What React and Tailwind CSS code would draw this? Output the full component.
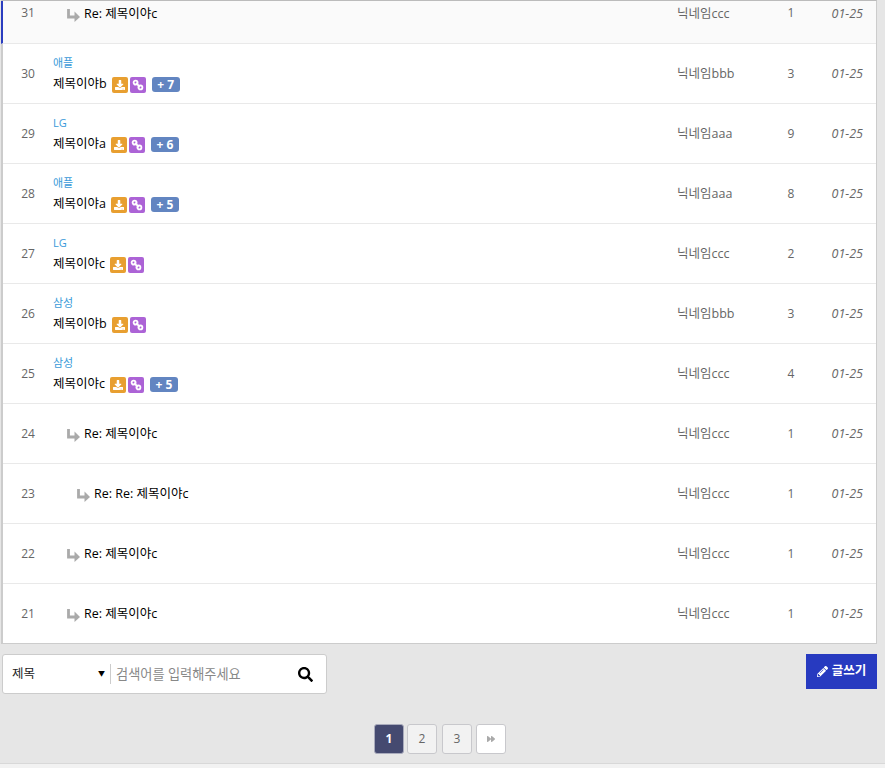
import { FaDownload, FaSearch, FaPencilAlt, FaForward } from 'react-icons/fa'

const ROWS = [
  { no: 30, cat: '애플', title: '제목이야b', name: '닉네임bbb', hit: 3, files: true, more: 7 },
  { no: 29, cat: 'LG', title: '제목이야a', name: '닉네임aaa', hit: 9, files: true, more: 6 },
  { no: 28, cat: '애플', title: '제목이야a', name: '닉네임aaa', hit: 8, files: true, more: 5 },
  { no: 27, cat: 'LG', title: '제목이야c', name: '닉네임ccc', hit: 2, files: true },
  { no: 26, cat: '삼성', title: '제목이야b', name: '닉네임bbb', hit: 3, files: true },
  { no: 25, cat: '삼성', title: '제목이야c', name: '닉네임ccc', hit: 4, files: true, more: 5 },
  { no: 24, title: 'Re: 제목이야c', name: '닉네임ccc', hit: 1, depth: 1 },
  { no: 23, title: 'Re: Re: 제목이야c', name: '닉네임ccc', hit: 1, depth: 2 },
  { no: 22, title: 'Re: 제목이야c', name: '닉네임ccc', hit: 1, depth: 1 },
  { no: 21, title: 'Re: 제목이야c', name: '닉네임ccc', hit: 1, depth: 1 },
]

function ReplyIcon() {
  return (
    <svg width="13" height="13" viewBox="0 0 13 13" className="text-[#aaaaaa] mr-[4px] mt-[2px] shrink-0" fill="none">
      <path d="M1.5 0V8H8" stroke="currentColor" strokeWidth="2.8" />
      <path d="M7.5 2.5L13 8L7.5 13Z" fill="currentColor" />
    </svg>
  )
}

function LinkIcon() {
  return (
    <svg width="12" height="12" viewBox="0 0 12 12" fill="none" stroke="currentColor" strokeWidth="1.8">
      <circle cx="3.6" cy="3.6" r="2" />
      <circle cx="8.4" cy="8.4" r="2" />
      <path d="M4 4L8 8" />
    </svg>
  )
}

function ReplyTitle({ title, depth }) {
  return (
    <div className={`flex items-center text-black ${depth === 2 ? 'pl-[24px]' : 'pl-[14px]'}`}>
      <ReplyIcon />
      <span>{title}</span>
    </div>
  )
}

function FileBadges({ more }) {
  return (
    <>
      <span className="ml-[5px] w-4 h-4 rounded-[2px] bg-[#e89f30] text-white flex items-center justify-center">
        <FaDownload size={10} />
      </span>
      <span className="ml-[2px] w-4 h-4 rounded-[2px] bg-[#ac63d6] text-white flex items-center justify-center">
        <LinkIcon />
      </span>
      {more && (
        <span className="ml-[6px] self-start w-[28px] h-[15px] rounded-[3px] bg-[#6285c1] text-white text-xs font-bold leading-[15px] text-center whitespace-pre">
          + {more}
        </span>
      )}
    </>
  )
}

function Row({ row, last }) {
  return (
    <div className={`grid grid-cols-[50px_624px_95px_38px_1fr] items-center pt-[1px] ${last ? 'h-[59px]' : 'h-[60px] border-b border-[#e9e9e9]'} text-[#666666]`}>
      <div className="text-center text-xs">{row.no}</div>
      <div>
        {row.cat && <div className="text-[11px] leading-[14px] text-[#3a9ad9] mb-[7px]">{row.cat}</div>}
        {row.depth ? (
          <ReplyTitle title={row.title} depth={row.depth} />
        ) : (
          <div className="flex items-center text-black h-4">
            <span>{row.title}</span>
            <FileBadges more={row.more} />
          </div>
        )}
      </div>
      <div>{row.name}</div>
      <div className="text-center text-xs">{row.hit}</div>
      <div className="italic text-right pr-[13px]">01-25</div>
    </div>
  )
}

function PageButton({ children, active, plain, className }) {
  let tone = 'bg-[#f2f2f2] text-[#666666] border-[#c8c8cc]'
  if (active) tone = 'bg-[#454a70] text-white font-bold border-[#a9abbc]'
  if (plain) tone = 'bg-white text-[#aaaaaa] border-[#c8c8cc]'
  return (
    <span className={`w-[30px] h-[30px] rounded-[3px] border flex items-center justify-center text-xs ${tone} ${className}`}>
      {children}
    </span>
  )
}

export default function App() {
  return (
    <div className="min-h-[768px] bg-[#e6e6e6] text-[12.5px] font-['Open_Sans','Noto_Sans_CJK_KR',sans-serif] relative">
      {/* Board list */}
      <div className="ml-[1px] w-[876px] bg-white border-t border-r border-b border-t-[#bbbbbb] border-r-[#cccccc] border-b-[#cccccc] border-l-2 border-l-[#cccccc]">
        <div className="grid grid-cols-[50px_624px_95px_38px_1fr] h-[43px] pt-[4px] -ml-[2px] border-l-2 border-l-[#2a3dbf] bg-[#fafafa] border-b border-[#e9e9e9] text-[#666666]">
          <div className="text-center text-xs">31</div>
          <div><ReplyTitle title="Re: 제목이야c" depth={1} /></div>
          <div>닉네임ccc</div>
          <div className="text-center text-xs">1</div>
          <div className="italic text-right pr-[13px]">01-25</div>
        </div>
        {ROWS.map((row, i) => (
          <Row key={row.no} row={row} last={i === ROWS.length - 1} />
        ))}
      </div>

      {/* Search + write */}
      <div className="flex items-start justify-between ml-[2px] w-[875px] mt-[10px]">
        <div className="w-[325px] h-[40px] bg-white border border-[#cccccc] rounded-[3px] flex items-center">
          <div className="w-[108px] h-5 border-r border-[#cccccc] flex items-center justify-between pl-[9px] pr-[5px] pt-[1px] text-[#222222]">
            <span>제목</span>
            <span className="text-[7px] text-black">▼</span>
          </div>
          <span className="pl-[5px] pt-[1px] flex-1 text-[13.2px] text-[#888888]">검색어를 입력해주세요</span>
          <FaSearch size={15} className="text-black mr-[13px]" />
        </div>
        <div className="w-[71px] h-[35px] bg-[#273ac0] text-white font-bold flex items-center justify-center gap-[4px]">
          <FaPencilAlt size={11} />
          <span>글쓰기</span>
        </div>
      </div>

      {/* Pagination */}
      <div className="flex justify-center mt-[30px] pr-[5px]">
        <PageButton active>1</PageButton>
        <PageButton className="ml-[3px]">2</PageButton>
        <PageButton className="ml-[5px]">3</PageButton>
        <PageButton plain className="ml-[4px]"><FaForward size={8} /></PageButton>
      </div>

      <div className="absolute left-0 right-0 bottom-0 h-[5px] bg-[#f2f2f2] border-t border-[#d8d8d8]" />
    </div>
  )
}
